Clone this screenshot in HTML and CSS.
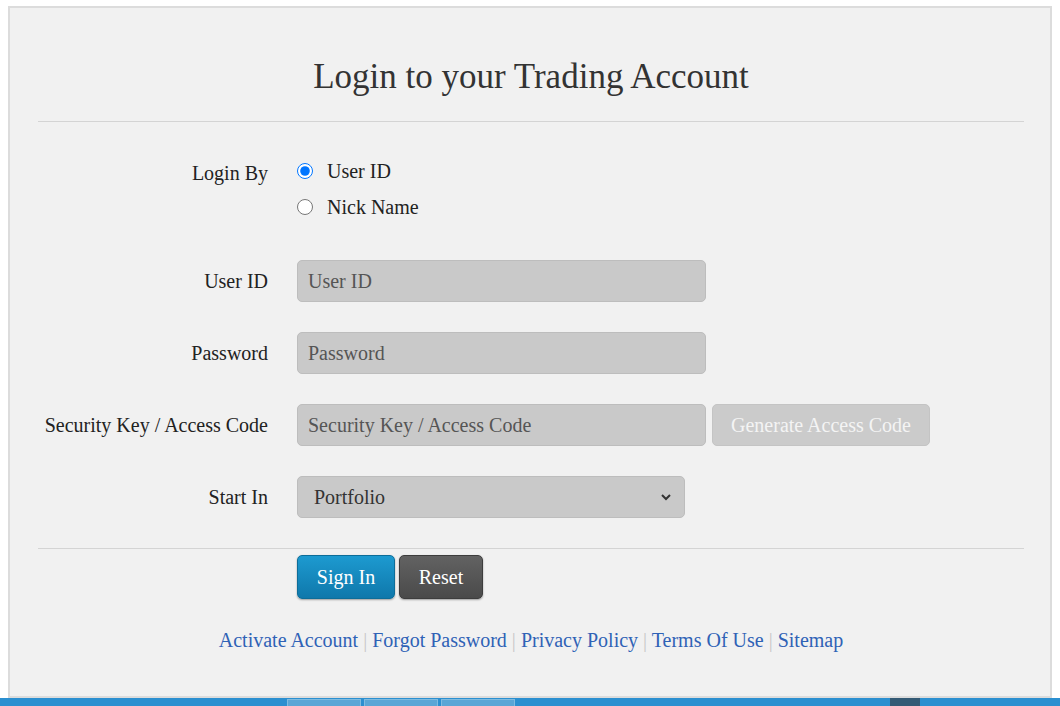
FILE: index.html
```html
<!DOCTYPE html>
<html lang="en">

<head>
    <meta charset="UTF-8">
    <meta name="viewport" content="width=device-width, initial-scale=1.0">
    <link rel="stylesheet" href="styles.css">
    <title>Login</title>
</head>

<body>
    <div class="panel">
        <h1 class="titulo">Login to your Trading Account</h1>
        <hr class="linea">

        <form class="form">
            <div class="fila fila_radio">
                <label class="etiqueta">Login By</label>
                <div class="radios">
                    <label class="radio"><input type="radio" name="by" checked> User ID</label>
                    <label class="radio"><input type="radio" name="by"> Nick Name</label>
                </div>
            </div>

            <div class="fila">
                <label class="etiqueta">User ID</label>
                <input class="input" type="text" placeholder="User ID">
            </div>

            <div class="fila">
                <label class="etiqueta">Password</label>
                <input class="input" type="password" placeholder="Password">
            </div>

            <div class="fila">
                <label class="etiqueta">Security Key / Access Code</label>
                <input class="input" type="text" placeholder="Security Key / Access Code">
                <button type="button" class="generar">Generate Access Code</button>
            </div>

            <div class="fila">
                <label class="etiqueta">Start In</label>
                <div class="select_box">
                    <select class="select">
                        <option>Portfolio</option>
                    </select>
                    <svg class="flecha" width="12" height="8" viewBox="0 0 12 8"><path d="M2 2 L6 6 L10 2" fill="none" stroke="#333" stroke-width="2"/></svg>
                </div>
            </div>
        </form>

        <hr class="linea linea_baja">

        <div class="botones">
            <button type="button" class="boton boton_azul">Sign In</button>
            <button type="button" class="boton boton_gris">Reset</button>
        </div>

        <div class="links">
            <a href="#">Activate Account</a> <span class="sep">|</span>
            <a href="#">Forgot Password</a> <span class="sep">|</span>
            <a href="#">Privacy Policy</a> <span class="sep">|</span>
            <a href="#">Terms Of Use</a> <span class="sep">|</span>
            <a href="#">Sitemap</a>
        </div>
    </div>

    <div class="barra">
        <span class="tab tab1"></span>
        <span class="tab"></span>
        <span class="tab"></span>
        <span class="mancha"></span>
    </div>
</body>

</html>
```

FILE: styles.css
```css
body {
    margin: 0;
    background-color: #fff;
    font-family: "Liberation Serif", "Times New Roman", serif;
    color: #222;
    overflow: hidden;
}

.panel {
    margin: 6px 8px 0 8px;
    height: 692px;
    box-sizing: border-box;
    background-color: #f1f1f1;
    border: 2px solid #dcdcdc;
    padding: 0 26px 0 28px;
}

.titulo {
    margin: 0;
    padding-top: 49px;
    height: 64px;
    text-align: center;
    font-weight: normal;
    font-size: 35px;
    color: #333;
}

.linea {
    margin: 0;
    border: 0;
    border-top: 1px solid #d4d4d4;
    height: 0;
}

.form {
    padding-top: 36px;
    display: flex;
    flex-direction: column;
    gap: 30px;
}

.fila {
    display: flex;
    align-items: center;
    height: 42px;
}

.fila_radio {
    align-items: flex-start;
    height: 70px;
    margin-bottom: 2px;
}

.etiqueta {
    width: 230px;
    flex: none;
    text-align: right;
    padding-right: 29px;
    font-size: 20px;
    color: #222;
    white-space: nowrap;
}

.fila_radio .etiqueta {
    padding-top: 4px;
}

.radios {
    display: flex;
    flex-direction: column;
    gap: 10px;
}

.radio {
    display: flex;
    align-items: center;
    font-size: 20px;
    height: 26px;
}

.radio input {
    width: 16px;
    height: 16px;
    margin: 0 14px 0 0;
}

.input {
    width: 409px;
    height: 42px;
    box-sizing: border-box;
    border: 1px solid #bdbdbd;
    border-radius: 5px;
    background-color: #c9c9c9;
    padding: 0 10px;
    font-family: "Liberation Serif", "Times New Roman", serif;
    font-size: 20px;
    color: #333;
}

.input::placeholder {
    color: #555;
}

.generar {
    margin-left: 6px;
    width: 218px;
    height: 42px;
    border: 1px solid #c4c4c4;
    border-radius: 5px;
    background-color: #cbcbcb;
    color: #f4f4f4;
    font-family: "Liberation Serif", "Times New Roman", serif;
    font-size: 20px;
}

.select_box {
    position: relative;
}

.select {
    width: 388px;
    height: 42px;
    box-sizing: border-box;
    border: 1px solid #bdbdbd;
    border-radius: 5px;
    background-color: #c9c9c9;
    padding: 0 16px;
    font-family: "Liberation Serif", "Times New Roman", serif;
    font-size: 20px;
    color: #333;
    appearance: none;
}

.flecha {
    position: absolute;
    right: 13px;
    top: 17px;
}

.linea_baja {
    margin-top: 30px;
}

.botones {
    display: flex;
    gap: 4px;
    padding-left: 259px;
    margin-top: 6px;
}

.boton {
    height: 44px;
    border-radius: 5px;
    color: #fff;
    font-family: "Liberation Serif", "Times New Roman", serif;
    font-size: 20px;
    box-shadow: 0 1px 2px rgba(0, 0, 0, 0.35);
}

.boton_azul {
    width: 98px;
    border: 1px solid #0d6d99;
    background: linear-gradient(#1d9ad0, #0f78ab);
}

.boton_gris {
    width: 84px;
    border: 1px solid #3d3d3d;
    background: linear-gradient(#626262, #4a4a4a);
}

.links {
    margin-top: 30px;
    text-align: center;
    font-size: 20px;
}

.links a {
    color: #2f62b6;
    text-decoration: none;
}

.sep {
    color: #c8c8c8;
}

.barra {
    height: 8px;
    background-color: #2b8fd0;
    display: flex;
    align-items: flex-end;
    gap: 3px;
    padding-left: 287px;
    position: relative;
}

.tab {
    width: 72px;
    height: 6px;
    background-color: #5aa6d6;
    border: 1px solid #7fbbe0;
    border-bottom: 0;
}

.mancha {
    position: absolute;
    right: 140px;
    bottom: 0;
    width: 30px;
    height: 8px;
    background-color: #335a75;
}
```
